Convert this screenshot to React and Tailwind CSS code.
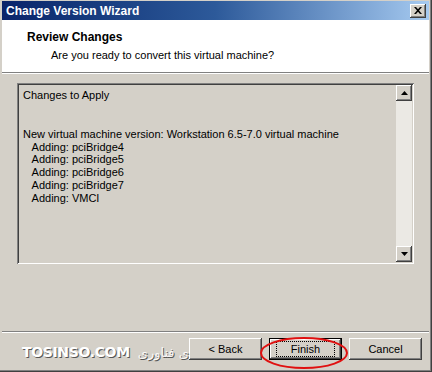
const raised =
  'shadow-[inset_-1px_-1px_#404040,inset_1px_1px_#ffffff,inset_-2px_-2px_#808080,inset_2px_2px_#d4d0c8]'

function Btn({ children, isDefault }) {
  return (
    <div
      className={
        'w-[73px] h-[22px] flex items-center justify-center bg-[#d4d0c8] text-[11px] text-black ' +
        (isDefault ? 'border border-black' : raised)
      }
    >
      {isDefault ? (
        <div className={'w-full h-full flex items-center justify-center ' + raised}>
          <span className="px-[14px] py-[1px] border border-dotted border-black leading-[12px]">
            {children}
          </span>
        </div>
      ) : (
        children
      )}
    </div>
  )
}

function Arrow({ up }) {
  return (
    <div className={'w-[16px] h-[16px] shrink-0 bg-[#d4d0c8] flex items-center justify-center ' + raised}>
      <svg width="7" height="4" viewBox="0 0 7 4">
        {up ? <path d="M3.5 0 L7 4 L0 4 Z" fill="#000" /> : <path d="M0 0 L7 0 L3.5 4 Z" fill="#000" />}
      </svg>
    </div>
  )
}

export default function App() {
  const lines = [
    'Changes to Apply',
    '',
    '',
    'New virtual machine version: Workstation 6.5-7.0 virtual machine',
    '   Adding: pciBridge4',
    '   Adding: pciBridge5',
    '   Adding: pciBridge6',
    '   Adding: pciBridge7',
    '   Adding: VMCI',
  ]

  return (
    <div className="w-[432px] h-[372px] relative overflow-hidden bg-[#d4d0c8] font-['Liberation_Sans',Arial,sans-serif] shadow-[inset_-1px_-1px_#404040,inset_-2px_-2px_#808080]">
      <div className="flex flex-col h-full pl-[2px] pr-[3px] pt-[1px] pb-[3px]">
        {/* title bar */}
        <div className="h-[19px] shrink-0 flex items-center justify-between pl-[4px] pr-[3px] bg-gradient-to-r from-[#0a246a] via-[#2d5a9a] to-[#a6caf0]">
          <span className="text-white font-bold text-[12px] leading-none">Change Version Wizard</span>
          <div className={'w-[16px] h-[14px] bg-[#d4d0c8] flex items-center justify-center ' + raised}>
            <svg width="8" height="7" viewBox="0 0 8 7">
              <path d="M0 0h2l2 2.2L6 0h2L5 3.5 8 7H6L4 4.8 2 7H0l3-3.5Z" fill="#000" />
            </svg>
          </div>
        </div>

        {/* header */}
        <div className="h-[52px] shrink-0 bg-white pl-[25px] pt-[9px]">
          <div className="font-bold text-[12px] leading-[16px] text-black">Review Changes</div>
          <div className="text-[11px] leading-[14px] text-black pl-[24px] mt-[3px]">
            Are you ready to convert this virtual machine?
          </div>
        </div>
        <div className="h-[2px] shrink-0 border-t border-[#808080] border-b border-b-white" />

        {/* body */}
        <div className="flex-1 px-[15px] pt-[9px] pb-[105px]">
          <div className="h-full flex bg-[#d4d0c8] shadow-[inset_1px_1px_#808080,inset_-1px_-1px_#ffffff,inset_2px_2px_#404040,inset_-2px_-2px_#d4d0c8] p-[2px]">
            <div className="flex-1 pl-[4px] pt-[4px] text-[11px] leading-[12.9px] text-black whitespace-pre">
              {lines.map((l, i) => (
                <div key={i} className="h-[12.9px]">
                  {l}
                </div>
              ))}
            </div>
            <div className="w-[16px] flex flex-col bg-[#ebe9e4]">
              <Arrow up />
              <div className="flex-1" />
              <Arrow />
            </div>
          </div>
        </div>
      </div>

      {/* bottom etched line + buttons */}
      <div className="absolute left-[2px] right-[3px] bottom-[3px] h-[38px]">
        <div className="h-[2px] border-t border-[#808080] border-b border-b-white" />
        <div className="flex justify-end gap-[7px] pr-[7px] pt-[5px]">
          <Btn>&lt; Back</Btn>
          <Btn isDefault>Finish</Btn>
          <Btn>Cancel</Btn>
        </div>
      </div>

      {/* watermark */}
      <div className="absolute left-[22px] top-[342px] flex items-center gap-[8px] pointer-events-none">
        <span className="text-[14px] font-bold text-white [text-shadow:1px_1px_0_#555] tracking-tight font-['DejaVu_Sans',sans-serif]">
          TOSINSO.COM
        </span>
        <span className="text-[13px] text-white/90 [text-shadow:1px_1px_0_#555] font-['DejaVu_Sans',sans-serif]" dir="rtl">
          ی فناوری
        </span>
      </div>

      {/* red ellipse */}
      <svg className="absolute left-[259px] top-[336px]" width="90" height="34" viewBox="0 0 90 34">
        <ellipse cx="45" cy="17" rx="43" ry="15" fill="none" stroke="#e01010" strokeWidth="2" />
      </svg>
    </div>
  )
}
